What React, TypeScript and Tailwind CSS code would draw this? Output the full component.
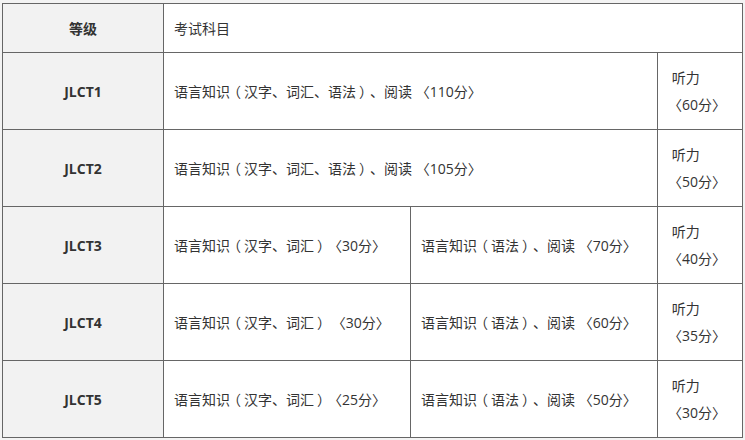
const rows = [
  { level: 'JLCT1', parts: ['语言知识（汉字、词汇、语法）、阅读 〈110分〉'], listen: '〈60分〉' },
  { level: 'JLCT2', parts: ['语言知识（汉字、词汇、语法）、阅读 〈105分〉'], listen: '〈50分〉' },
  { level: 'JLCT3', parts: ['语言知识（汉字、词汇）〈30分〉', '语言知识（语法）、阅读 〈70分〉'], listen: '〈40分〉' },
  { level: 'JLCT4', parts: ['语言知识（汉字、词汇） 〈30分〉', '语言知识（语法）、阅读 〈60分〉'], listen: '〈35分〉' },
  { level: 'JLCT5', parts: ['语言知识（汉字、词汇）〈25分〉', '语言知识（语法）、阅读 〈50分〉'], listen: '〈30分〉' },
];

// full-width parens drawn centred in their box, as the source font does
function Subject({ text }: { text: string }) {
  return (
    <>
      {text.split(/([（）])/).map((s, i) =>
        s === '（' || s === '）' ? (
          <span key={i} className="inline-block w-[14px] text-center [font-feature-settings:'palt']">
            {s}
          </span>
        ) : (
          <span key={i}>{s}</span>
        )
      )}
    </>
  );
}

export default function App() {
  return (
    <div
      className="min-h-screen bg-[#f3f3f3] pt-[3px] pl-[2px] text-[14px] text-[#333] [text-spacing-trim:space-all]"
      style={{ fontFamily: '"Open Sans", "Noto Sans CJK SC", sans-serif' }}
    >
      <table className="w-[740px] table-fixed border-collapse bg-white">
        <colgroup>
          <col className="w-[161px]" />
          <col className="w-[247px]" />
          <col className="w-[247px]" />
          <col className="w-[85px]" />
        </colgroup>
        <tbody>
          <tr className="h-[49px]">
            <td className="border border-[#666] bg-[#f2f2f2] text-center font-bold">等级</td>
            <td colSpan={3} className="border border-[#666] px-[10px]">考试科目</td>
          </tr>
          {rows.map((r) => (
            <tr key={r.level} className="h-[77px]">
              <td className="border border-[#666] bg-[#f2f2f2] text-center font-bold">{r.level}</td>
              {r.parts.length === 1 ? (
                <td colSpan={2} className="border border-[#666] px-[10px]">
                  <Subject text={r.parts[0]} />
                </td>
              ) : (
                r.parts.map((p) => (
                  <td key={p} className="border border-[#666] px-[10px] whitespace-nowrap">
                    <Subject text={p} />
                  </td>
                ))
              )}
              <td className="border border-[#666] pl-[10px] pr-[4px] leading-[27px]">
                <div>&nbsp;听力</div>
                <div>{r.listen}</div>
              </td>
            </tr>
          ))}
        </tbody>
      </table>
    </div>
  );
}
